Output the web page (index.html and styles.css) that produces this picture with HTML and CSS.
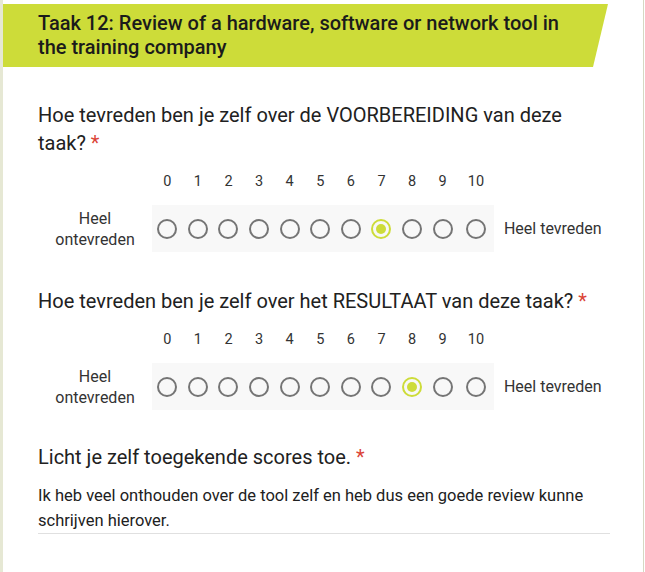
FILE: index.html
```html
<!DOCTYPE html>
<html lang="nl">
<head>
<meta charset="utf-8">
<title>Taak 12</title>
<link rel="stylesheet" href="styles.css">
</head>
<body>
<div class="page">
  <div class="banner">
    <h1 class="banner-title">Taak 12: Review of a hardware, software or network tool in the training company</h1>
  </div>

  <div class="question q1">
    <div class="q-title">Hoe tevreden ben je zelf over de VOORBEREIDING van deze taak? <span class="req">*</span></div>
    <div class="scale">
      <div class="scale-head">
        <div class="side"></div>
        <div class="cells">
          <span class="cell">0</span><span class="cell">1</span><span class="cell">2</span><span class="cell">3</span><span class="cell">4</span><span class="cell">5</span><span class="cell">6</span><span class="cell">7</span><span class="cell">8</span><span class="cell">9</span><span class="cell last">10</span>
        </div>
      </div>
      <div class="scale-body">
        <div class="side">Heel<br>ontevreden</div>
        <div class="cells track">
          <span class="cell"><span class="radio"></span></span>
          <span class="cell"><span class="radio"></span></span>
          <span class="cell"><span class="radio"></span></span>
          <span class="cell"><span class="radio"></span></span>
          <span class="cell"><span class="radio"></span></span>
          <span class="cell"><span class="radio"></span></span>
          <span class="cell"><span class="radio"></span></span>
          <span class="cell"><span class="radio checked"></span></span>
          <span class="cell"><span class="radio"></span></span>
          <span class="cell"><span class="radio"></span></span>
          <span class="cell last"><span class="radio"></span></span>
        </div>
        <div class="end-label">Heel tevreden</div>
      </div>
    </div>
  </div>

  <div class="question q2">
    <div class="q-title">Hoe tevreden ben je zelf over het RESULTAAT van deze taak? <span class="req">*</span></div>
    <div class="scale">
      <div class="scale-head">
        <div class="side"></div>
        <div class="cells">
          <span class="cell">0</span><span class="cell">1</span><span class="cell">2</span><span class="cell">3</span><span class="cell">4</span><span class="cell">5</span><span class="cell">6</span><span class="cell">7</span><span class="cell">8</span><span class="cell">9</span><span class="cell last">10</span>
        </div>
      </div>
      <div class="scale-body">
        <div class="side">Heel<br>ontevreden</div>
        <div class="cells track">
          <span class="cell"><span class="radio"></span></span>
          <span class="cell"><span class="radio"></span></span>
          <span class="cell"><span class="radio"></span></span>
          <span class="cell"><span class="radio"></span></span>
          <span class="cell"><span class="radio"></span></span>
          <span class="cell"><span class="radio"></span></span>
          <span class="cell"><span class="radio"></span></span>
          <span class="cell"><span class="radio"></span></span>
          <span class="cell"><span class="radio checked"></span></span>
          <span class="cell"><span class="radio"></span></span>
          <span class="cell last"><span class="radio"></span></span>
        </div>
        <div class="end-label">Heel tevreden</div>
      </div>
    </div>
  </div>

  <div class="question q3">
    <div class="q-title">Licht je zelf toegekende scores toe. <span class="req">*</span></div>
    <div class="answer">Ik heb veel onthouden over de tool zelf en heb dus een goede review kunne schrijven hierover.</div>
  </div>
</div>
</body>
</html>
```

FILE: styles.css
```css
html, body {
  margin: 0;
  padding: 0;
  background: #ffffff;
}

body {
  font-family: Roboto, "Liberation Sans", Arial, sans-serif;
  color: #212121;
}

.page {
  box-sizing: border-box;
  width: 644px;
  height: 572px;
  border-left: 3px solid #e6e8d4;
  border-right: 1px solid #d6d8c3;
  padding-top: 4px;
}

.banner {
  width: 605px;
  height: 63px;
  background: #cddc39;
  clip-path: polygon(0 0, 100% 0, calc(100% - 15px) 100%, 0 100%);
  box-sizing: border-box;
  padding: 7px 40px 0 35px;
}

.banner-title {
  margin: 0;
  font-size: 20px;
  font-weight: 500;
  line-height: 24px;
  color: #1b1b1b;
}

.question {
  padding: 0 33px 0 35px;
}

.q1 { margin-top: 34px; }
.q2 { margin-top: 35px; }
.q3 { margin-top: 33px; }

.q-title {
  font-size: 20px;
  line-height: 28px;
  color: #212121;
}

.req {
  color: #db4437;
}

.scale {
  display: flex;
  flex-direction: column;
}

.scale-head {
  display: flex;
  margin-top: 12px;
  height: 24px;
  align-items: center;
  font-size: 14.5px;
  color: #333333;
}

.scale-body {
  display: flex;
  align-items: center;
  margin-top: 12px;
}

.side {
  width: 114px;
  flex: none;
  text-align: center;
  font-size: 16px;
  line-height: 21px;
  color: #333333;
}

.cells {
  display: flex;
  align-items: center;
}

.cell {
  width: 30.6px;
  flex: none;
  display: flex;
  justify-content: center;
  align-items: center;
}

.cell.last {
  width: 36px;
}

.track {
  background: #f8f8f8;
  height: 47px;
}

.radio {
  box-sizing: border-box;
  width: 20px;
  height: 20px;
  border: 2px solid #757575;
  border-radius: 50%;
  display: flex;
  justify-content: center;
  align-items: center;
}

.radio.checked {
  border-color: #cddc39;
}

.radio.checked::after {
  content: "";
  width: 10px;
  height: 10px;
  border-radius: 50%;
  background: #cddc39;
}

.end-label {
  margin-left: 10px;
  font-size: 16px;
  color: #333333;
  white-space: nowrap;
}

.answer {
  margin-top: 12px;
  font-size: 16.5px;
  line-height: 25px;
  color: #212121;
  border-bottom: 1px solid #e0e0e0;
  padding-bottom: 0;
}
```
